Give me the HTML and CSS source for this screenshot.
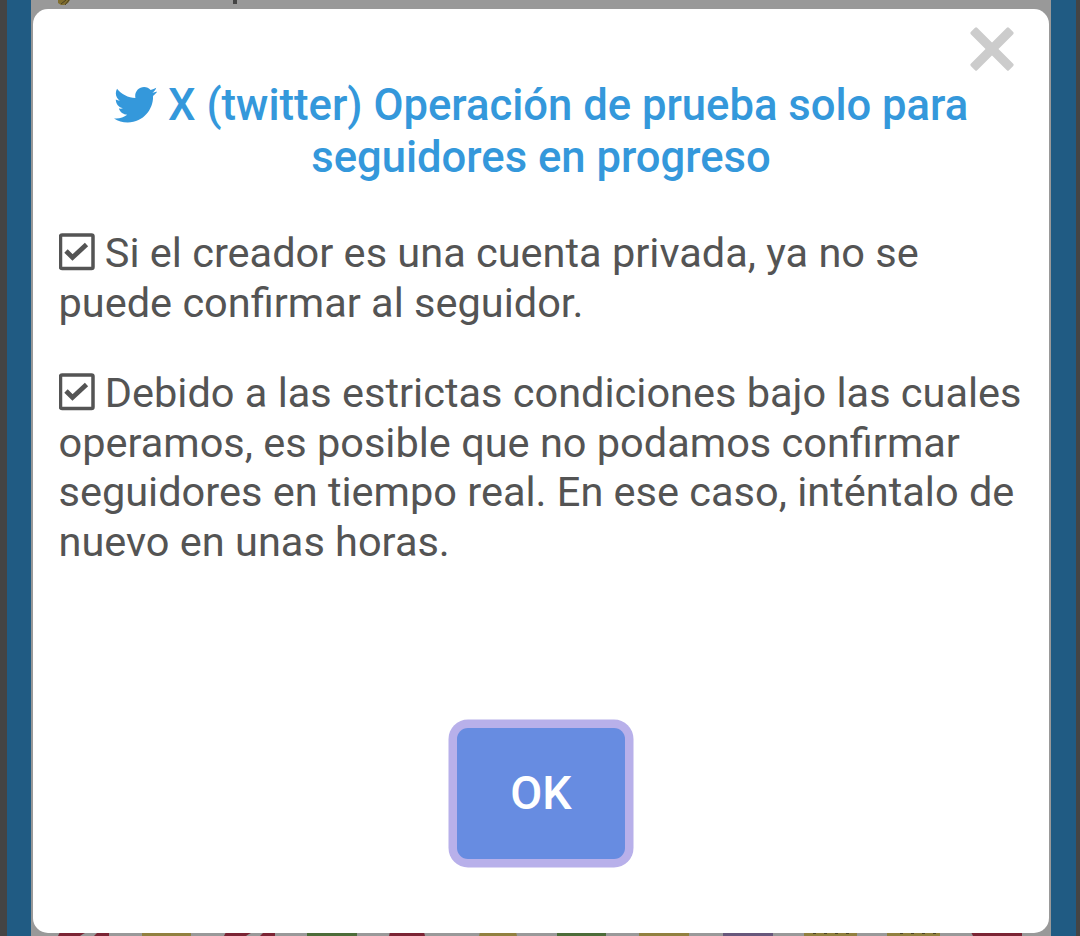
FILE: index.html
```html
<!DOCTYPE html>
<html lang="es">
<head>
<meta charset="utf-8">
<title>X (twitter)</title>
<link rel="stylesheet" href="styles.css">
</head>
<body>
<div class="page">
  <svg class="peek peek-top" viewBox="0 0 1016 9"><path d="M25 0h12l-2 3-4 2h-3l-3-2z" fill="#806d2d"/><path d="M28 4l5-4M32 5l4-5" stroke="#494122"/><path d="M200 0h4v4h-4z" fill="#444"/></svg>
  <svg class="peek peek-bottom" viewBox="0 0 1016 4">
    <path d="M27 0h27l-4 2-3 2H25zM65 0h11v4H61zM193 0h27l-4 2-3 2h-22zM231 0h11v4h-15zM357 0h34l1 4h-36zM938 0h51v4h-49z" fill="#7b2434"/>
    <path d="M109 0h49v4h-49zM447 0h36l1 4h-38zM606 0h50v4h-50zM771 0h53v4h-53zM854 0h53v4h-53z" fill="#91803f"/>
    <path d="M274 0h50v4h-50zM524 0h49v4h-49z" fill="#4c6c39"/>
    <path d="M690 0h50v4h-50z" fill="#67577b"/>
    <path d="M780 1h3m8 0h3m8 0h3m8 0h3m51 0h3m8 0h3m8 0h3m8 0h3" stroke="#4b4426" stroke-width="2"/>
  </svg>
</div>
<main class="dialog">
  <button class="close" aria-label="Cerrar"><svg viewBox="-23 -23 46 46" fill="#ccc"><rect x="-27" y="-4.500" width="54" height="9" rx="1.500" transform="rotate(45)"/><rect x="-27" y="-4.500" width="54" height="9" rx="1.500" transform="rotate(-45)"/></svg></button>
  <h1 class="title"><svg class="bird" viewBox="0 0 512 512"><path fill="currentColor" d="M459.370 151.716c.325 4.548.325 9.097.325 13.645 0 138.720-105.583 298.558-298.558 298.558-59.452 0-114.680-17.219-161.137-47.106 8.447.974 16.568 1.299 25.340 1.299 49.055 0 94.213-16.568 130.274-44.832-46.132-.975-84.792-31.188-98.112-72.772 6.498.974 12.995 1.624 19.818 1.624 9.421 0 18.843-1.300 27.614-3.573-48.081-9.747-84.143-51.980-84.143-102.985v-1.299c13.969 7.797 30.214 12.670 47.431 13.319-28.264-18.843-46.781-51.005-46.781-87.391 0-19.492 5.197-37.360 14.294-52.954 51.655 63.675 129.300 105.258 216.365 109.807-1.624-7.797-2.599-15.918-2.599-24.040 0-57.828 46.782-104.934 104.934-104.934 30.213 0 57.502 12.670 76.670 33.137 23.715-4.548 46.456-13.320 66.599-25.340-7.798 24.366-24.366 44.833-46.132 57.827 21.117-2.273 41.584-8.122 60.426-16.243-14.292 20.791-32.161 39.308-52.628 54.253z"/></svg> <span>X (twitter) Operación de prueba solo para<br>seguidores en progreso</span></h1>
  <div class="notes">
    <p><svg class="check" viewBox="0 0 36 38"><rect x="1.500" y="2" width="32.500" height="33.500" rx="1.500"/><path class="tick" d="M7 18l6.500 6.500L27.500 11.500"/></svg> Si el creador es una cuenta privada, ya no se<br>puede confirmar al seguidor.</p>
    <p><svg class="check" viewBox="0 0 36 38"><rect x="1.500" y="2" width="32.500" height="33.500" rx="1.500"/><path class="tick" d="M7 18l6.500 6.500L27.500 11.500"/></svg> Debido a las estrictas condiciones bajo las cuales<br>operamos, es posible que no podamos confirmar<br>seguidores en tiempo real. En ese caso, inténtalo de<br>nuevo en unas horas.</p>
  </div>
  <button class="ok">OK</button>
</main>
</body>
</html>
```
FILE: styles.css
```css
* { box-sizing: border-box; }
body {
  margin: 0;
  height: 936px;
  overflow: hidden;
  padding: 9px 31px 0 33px;
  background: #444;
  font-family: Roboto, "Liberation Sans", sans-serif;
}
.page {
  position: absolute;
  top: 0;
  left: 7px;
  width: 1069px;
  height: 936px;
  background: #999;
  border-left: 24px solid #205b83;
  border-right: 25px solid #205b83;
}
.peek { position: absolute; left: 2px; width: 1016px; }
.peek-top { top: 0; height: 9px; }
.peek-bottom { bottom: 0; height: 4px; }
.dialog {
  position: relative;
  display: flex;
  flex-direction: column;
  align-items: center;
  width: 1016px;
  height: 924px;
  padding-top: 71px;
  background: #fff;
  border-radius: 15px;
}
.close {
  position: absolute;
  top: 17px;
  right: 34px;
  width: 46px;
  height: 46px;
  padding: 0;
  border: 0;
  background: none;
}
.close svg { display: block; }
.title {
  margin: 0;
  color: #3498db;
  font-size: 43.600px;
  font-weight: 500;
  line-height: 51.600px;
  text-align: center;
  white-space: nowrap;
}
.bird { width: 43.500px; height: 43.500px; vertical-align: -6px; }
.notes {
  width: 965px;
  margin-top: 44.800px;
  color: #545454;
  font-size: 41.500px;
  line-height: 49.600px;
  white-space: nowrap;
}
.notes p { margin: 0 0 41px; }
.check {
  width: 36px;
  height: 38px;
  vertical-align: -4px;
  fill: none;
  stroke: #545454;
  stroke-width: 3.500;
}
.check .tick { stroke-width: 4.800; }
.ok {
  width: 168px;
  height: 131px;
  margin-top: 120.500px;
  padding: 0;
  border: 0;
  border-radius: 11px;
  background: #678ce1;
  box-shadow: 0 0 0 8.500px #b8b0ea;
  color: #fff;
  font: 500 46.500px/131px Roboto, "Liberation Sans", sans-serif;
}
```
